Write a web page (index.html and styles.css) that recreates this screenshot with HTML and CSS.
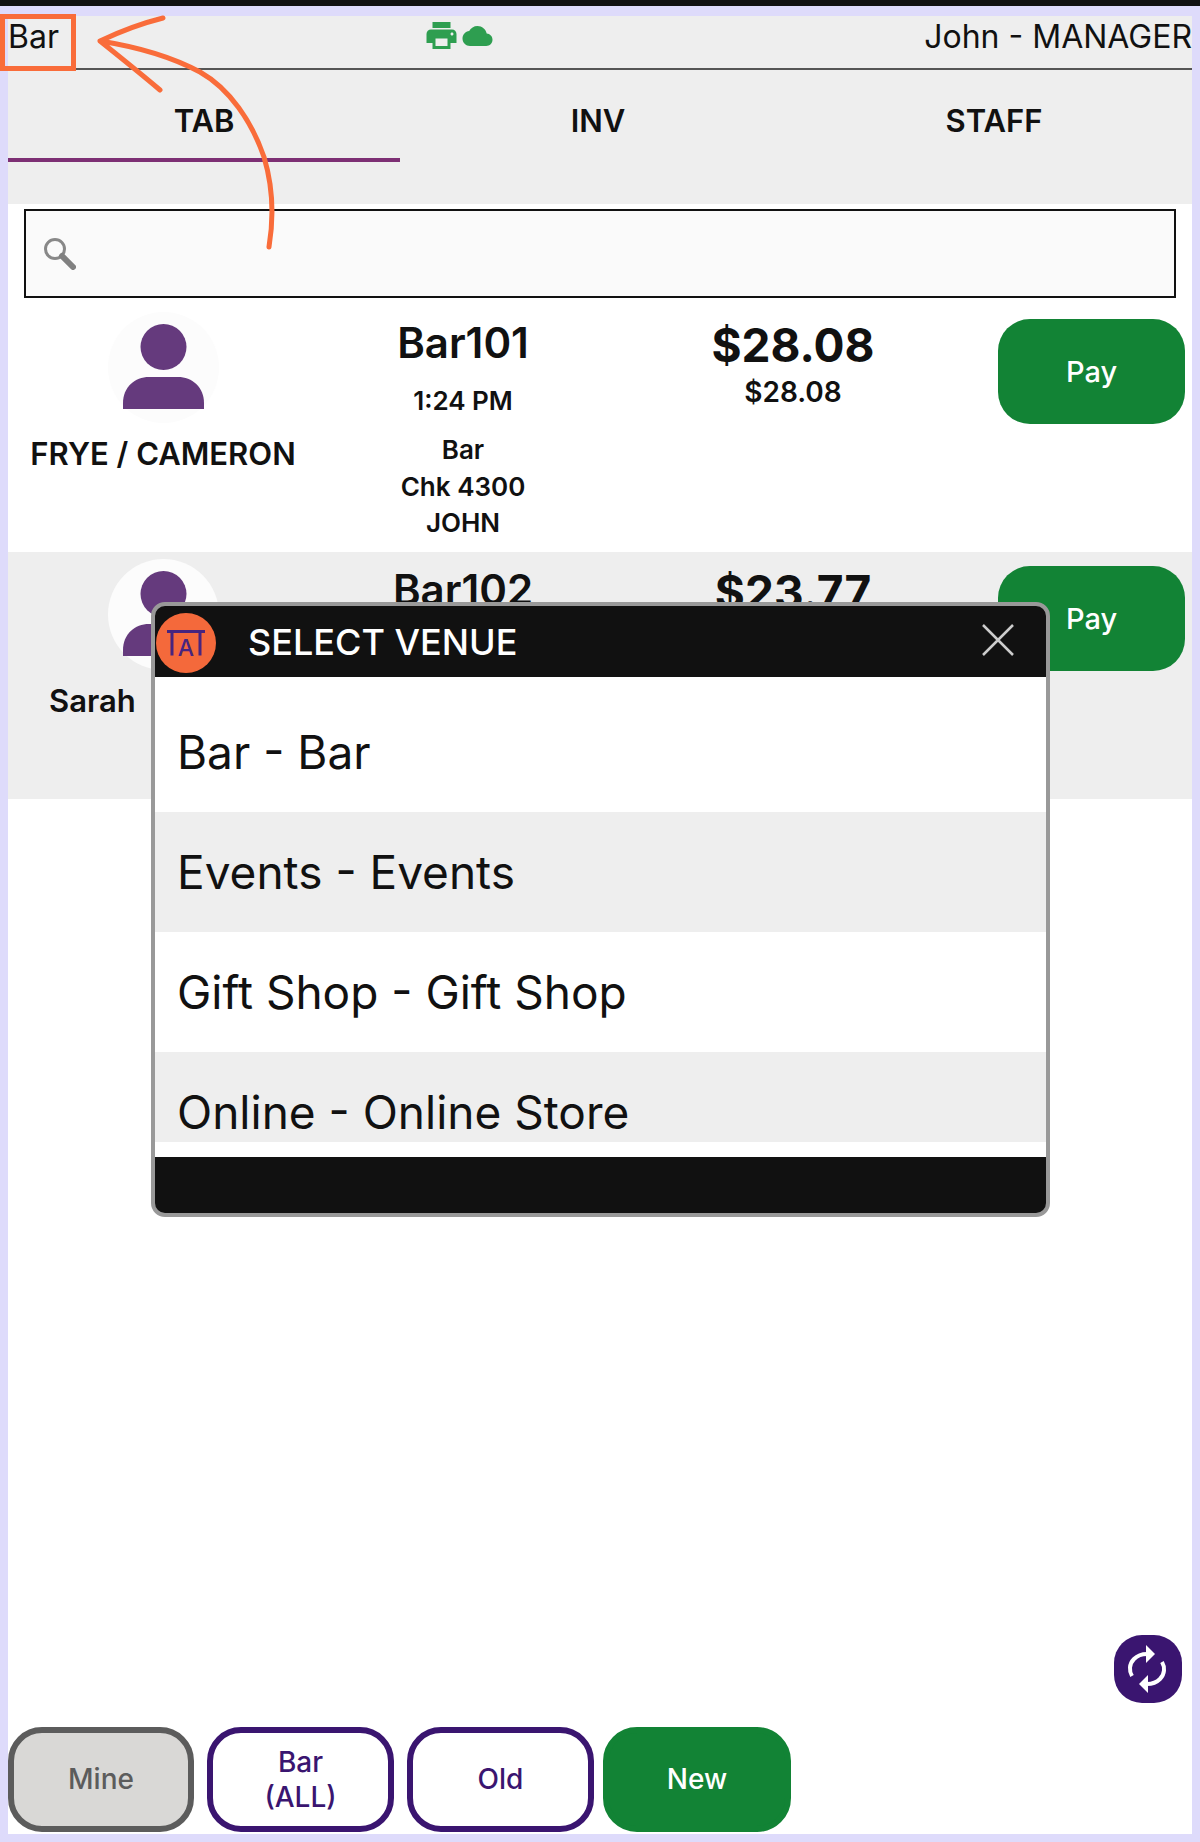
FILE: index.html
```html
<!DOCTYPE html>
<html lang="en">
<head>
<meta charset="utf-8">
<title>Select venue</title>
<link rel="stylesheet" href="styles.css">
</head>
<body>
<div class="topbar"></div>
<main class="app">
  <header class="status">
    <span class="venue">Bar</span>
    <span class="status-icons">
      <svg class="ic-print" viewBox="2 3 20 18"><path d="M19 8H5c-1.66 0-3 1.34-3 3v6h4v4h12v-4h4v-6c0-1.66-1.34-3-3-3zm-3 11H8v-5h8v5zm3-7c-.55 0-1-.45-1-1s.45-1 1-1 1 .45 1 1-.45 1-1 1zm-1-9H6v4h12V3z"/></svg>
      <svg class="ic-cloud" viewBox="0 4 24 16"><path d="M19.35 10.04C18.67 6.59 15.64 4 12 4 9.11 4 6.6 5.64 5.35 8.04 2.34 8.36 0 10.91 0 14c0 3.31 2.69 6 6 6h13c2.76 0 5-2.24 5-5 0-2.64-2.05-4.78-4.65-4.96z"/></svg>
    </span>
    <span class="user">John - MANAGER</span>
  </header>
  <nav class="tabs">
    <div class="tab tab-active">TAB</div>
    <div class="tab">INV</div>
    <div class="tab">STAFF</div>
  </nav>
  <div class="search">
    <svg class="ic-search" viewBox="0 0 32 32"><circle cx="11" cy="11" r="9.5"/><path class="handle" d="M18 18l11 11"/></svg>
  </div>
  <section class="row">
    <div class="who">
      <div class="avatar"><svg viewBox="0 0 111 111"><ellipse cx="55.500" cy="35" rx="23" ry="23"/><path d="M15 97v-6c0-16 12-26 26-26h29c14 0 26 10 26 26v6z"/></svg></div>
      <div class="name">FRYE / CAMERON</div>
    </div>
    <div class="info">
      <div class="tabno">Bar101</div>
      <div class="time">1:24 PM</div>
      <div class="meta">Bar<br>Chk 4300<br>JOHN</div>
    </div>
    <div class="money">
      <div class="total">$28.08</div>
      <div class="sub">$28.08</div>
    </div>
    <div class="act"><div class="pay">Pay</div></div>
  </section>
  <section class="row row-alt">
    <div class="who">
      <div class="avatar"><svg viewBox="0 0 111 111"><ellipse cx="55.500" cy="35" rx="23" ry="23"/><path d="M15 97v-6c0-16 12-26 26-26h29c14 0 26 10 26 26v6z"/></svg></div>
      <div class="name name-left">Sarah</div>
    </div>
    <div class="info"><div class="tabno">Bar102</div></div>
    <div class="money"><div class="total">$23.77</div></div>
    <div class="act"><div class="pay">Pay</div></div>
  </section>
  <footer class="filters">
    <div class="filter filter-off">Mine</div>
    <div class="filter">Bar<br>(ALL)</div>
    <div class="filter">Old</div>
    <div class="filter filter-new">New</div>
  </footer>

  <div class="refresh">
    <svg viewBox="0 0 68 68"><path class="arc" d="M18 41c-3-5-3-12 2-17 4-4 8-5 13-5"/><path class="tip" d="M32 10l9 9-9 9z"/><path class="arc" d="M48 27c3 5 3 12-2 17-4 4-8 5-13 5"/><path class="tip" d="M34 40l-9 9 9 9z"/></svg>
  </div>

  <div class="modal">
    <div class="modal-head">
      <div class="logo"><svg viewBox="0 0 60 60"><path d="M11 18.500h38M16 18.500v24M44 18.500v24" /><text x="30" y="42.500">A</text></svg></div>
      <div class="modal-title">SELECT VENUE</div>
      <svg class="ic-close" viewBox="0 0 32 32"><path d="M1 1l30 30M31 1L1 31"/></svg>
    </div>
    <div class="modal-body">
      <div class="venue-list">
        <div class="venue-item">Bar - Bar</div>
        <div class="venue-item venue-item-alt">Events - Events</div>
        <div class="venue-item">Gift Shop - Gift Shop</div>
        <div class="venue-item venue-item-alt">Online - Online Store</div>
      </div>
    </div>
    <div class="modal-foot"></div>
  </div>
</main>
<div class="callout"></div>
<svg class="arrow" viewBox="0 0 300 270"><path d="M163 18c-20 5-42 13-63 23 20 16 40 32 60 49M100 41c38 6 72 16 100 31 30 17 52 50 64 85 9 30 10 60 5 90"/></svg>
</body>
</html>
```
FILE: styles.css
```css
* { box-sizing: border-box; }
html, body { margin: 0; padding: 0; }
body {
  position: relative;
  height: 1842px;
  background: #dedbfb;
  font-family: Inter, Roboto, "Liberation Sans", sans-serif;
  color: #111;
  overflow: hidden;
}
.topbar { height: 6px; background: #111; margin-bottom: 10px; }
.app {
  position: relative;
  margin: 0 8px;
  height: 1818px;
  background: #fff;
  display: flex;
  flex-direction: column;
}
.status {
  height: 54px;
  background: #eee;
  border-bottom: 2px solid #555;
  display: grid;
  grid-template-columns: 418px auto 1fr;
  align-items: start;
  font-size: 32px;
  line-height: 34px;
  padding-top: 4px;
}
.status-icons { display: flex; gap: 5px; align-items: center; padding-top: 2px; }
.ic-print { width: 31px; height: 27px; fill: #2e9e50; }
.ic-cloud { width: 31px; height: 20px; fill: #2e9e50; }
.user { text-align: right; white-space: nowrap; }
.tabs {
  height: 134px;
  background: #eee;
  display: grid;
  grid-template-columns: 392px 1fr 1fr;
  align-items: start;
}
.tab {
  height: 92px;
  padding-top: 33px;
  text-align: center;
  font-size: 31px;
  line-height: 36px;
  font-weight: 600;
}
.tab-active { border-bottom: 4px solid #7d2f74; }
.search {
  height: 89px;
  margin: 5px 16px 7px;
  background: #fafafa;
  border: 2px solid #111;
  padding: 27px 0 0 18px;
}
.ic-search { width: 32px; height: 32px; display: block; fill: none; stroke: #888; stroke-width: 3; }
.ic-search .handle { stroke-width: 6; stroke-linecap: round; stroke: #808080; }
.row {
  height: 247px;
  display: grid;
  grid-template-columns: 310px 290px 370px 1fr;
  background: #fff;
}
.row-alt { background: #eee; }
.who { padding-top: 7px; display: flex; flex-direction: column; align-items: center; }
.avatar {
  width: 111px;
  height: 111px;
  border-radius: 50%;
  background: #fcfcfc;
}
.avatar svg { display: block; width: 111px; height: 111px; fill: #653a7d; }
.name { margin-top: 12px; font-size: 31px; line-height: 38px; font-weight: 600; white-space: nowrap; }
.name-left { align-self: flex-start; padding-left: 41px; }
.info { text-align: center; padding-top: 13px; }
.tabno { font-size: 42px; line-height: 50px; font-weight: 600; }
.time { margin-top: 15px; font-size: 26px; line-height: 36px; font-weight: 600; }
.meta { margin-top: 13px; font-size: 26px; line-height: 36.5px; font-weight: 600; }
.money { text-align: center; padding-top: 13px; }
.total { font-size: 46px; line-height: 54px; font-weight: 700; }
.sub { margin-top: 2px; font-size: 28px; line-height: 36px; font-weight: 600; }
.act { padding: 14px 7px 0 20px; }
.pay {
  height: 105px;
  border-radius: 32px;
  background: #128335;
  color: #fff;
  font-size: 29px;
  font-weight: 500;
  display: flex;
  align-items: center;
  justify-content: center;
}
.filters {
  margin-top: auto;
  margin-bottom: 2px;
  display: flex;
  gap: 13px;
}
.filter {
  width: 187px;
  height: 105px;
  border: 6px solid #3a1570;
  border-radius: 34px;
  background: #fff;
  color: #3a1570;
  font-size: 28px;
  line-height: 35px;
  font-weight: 500;
  text-align: center;
  display: flex;
  align-items: center;
  justify-content: center;
}
.filter-off { background: #d9d8d6; border-color: #5c5c5c; color: #5c5c5c; width: 186px; }
.filter-new { background: #128335; border-color: #128335; color: #fff; margin-left: -4px; width: 188px; }
.refresh {
  position: absolute;
  left: 1106px;
  top: 1619px;
  width: 68px;
  height: 68px;
  border-radius: 28px;
  background: #3a1570;
}
.refresh svg { display: block; width: 68px; height: 68px; }
.refresh .arc { fill: none; stroke: #fff; stroke-width: 4; }
.refresh .tip { fill: #fff; }
.modal {
  position: absolute;
  left: 143px;
  top: 586px;
  width: 899px;
  height: 615px;
  border: 4px solid #999;
  border-radius: 14px;
  background: #111;
  display: flex;
  flex-direction: column;
  overflow: hidden;
}
.modal-head {
  height: 71px;
  display: flex;
  align-items: center;
  color: #fff;
  padding: 0 32px 0 1px;
}
.logo { width: 60px; height: 60px; border-radius: 50%; background: #f4693b; flex: none; margin-top: 2px; }
.logo svg { display: block; width: 60px; height: 60px; fill: none; stroke: #47247f; stroke-width: 3; }
.logo text { font-family: Inter, sans-serif; font-size: 23px; font-weight: 500; text-anchor: middle; fill: #47247f; stroke: none; }
.modal-title { margin-left: 32px; font-size: 36px; font-weight: 500; white-space: nowrap; flex: 1; }
.ic-close { width: 32px; height: 32px; fill: none; stroke: #ccc; stroke-width: 2.500; margin-top: -4px; }
.modal-body { height: 480px; background: #fff; padding: 15px 0; }
.venue-list { height: 450px; overflow: hidden; }
.venue-item {
  height: 120px;
  padding: 0 0 0 22px;
  font-size: 46px;
  line-height: 120px;
  font-weight: 400;
  white-space: nowrap;
}
.venue-item-alt { background: #eee; }
.modal-foot { flex: 1; }
.callout {
  position: absolute;
  left: 0;
  top: 14px;
  width: 76px;
  height: 57px;
  border: 5px solid #f96c3a;
}
.arrow {
  position: absolute;
  left: 0;
  top: 0;
  width: 300px;
  height: 270px;
  fill: none;
  stroke: #f96c3a;
  stroke-width: 5;
  stroke-linecap: round;
  stroke-linejoin: round;
}
```
